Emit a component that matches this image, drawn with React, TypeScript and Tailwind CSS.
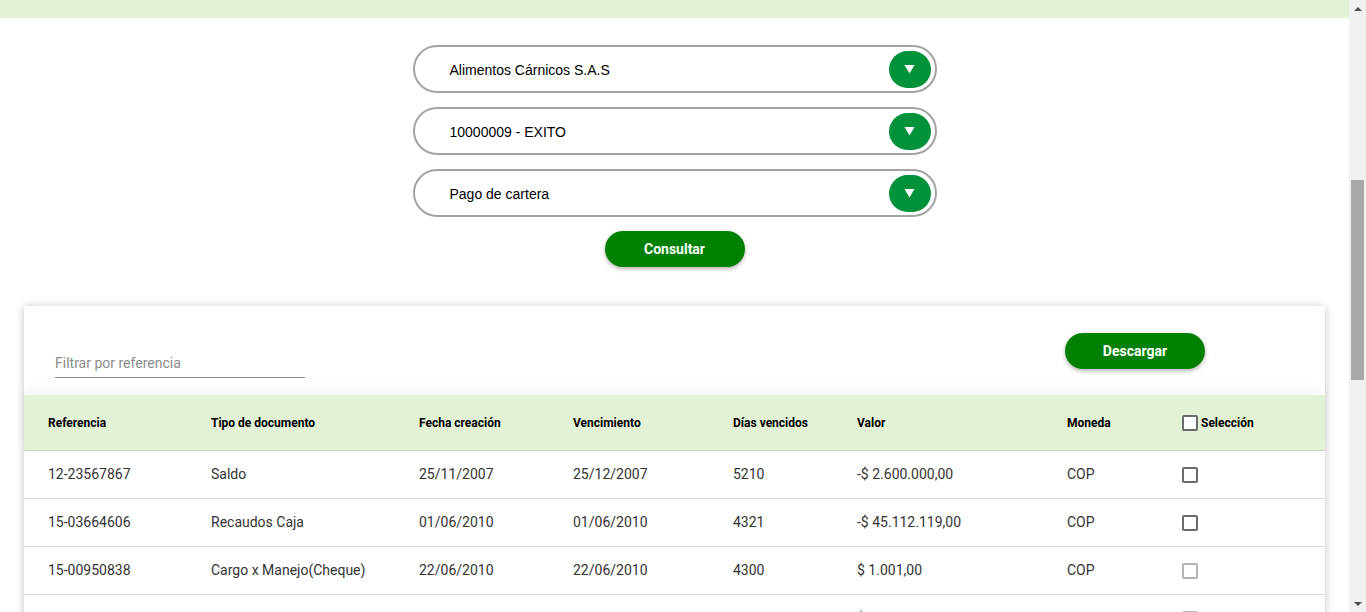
import React from 'react';

const selects = ['Alimentos Cárnicos S.A.S', '10000009 - EXITO', 'Pago de cartera'];

const rows = [
  { ref: '12-23567867', tipo: 'Saldo', fecha: '25/11/2007', venc: '25/12/2007', dias: '5210', valor: '-$ 2.600.000,00', moneda: 'COP', disabled: false },
  { ref: '15-03664606', tipo: 'Recaudos Caja', fecha: '01/06/2010', venc: '01/06/2010', dias: '4321', valor: '-$ 45.112.119,00', moneda: 'COP', disabled: false },
  { ref: '15-00950838', tipo: 'Cargo x Manejo(Cheque)', fecha: '22/06/2010', venc: '22/06/2010', dias: '4300', valor: '$ 1.001,00', moneda: 'COP', disabled: true },
  { ref: '', tipo: '', fecha: '', venc: '', dias: '', valor: '$ 1.001,00', moneda: '', disabled: true },
];

const cols = 'grid grid-cols-[163px_208px_154px_160px_124px_210px_115px_1fr] pl-[24px] items-center';

function Checkbox({ disabled }: { disabled?: boolean }) {
  return (
    <span
      className={`inline-block w-[16px] h-[16px] rounded-[2px] border-2 bg-white ${disabled ? 'border-[#b4b4b4]' : 'border-[#6b6b6b]'}`}
    />
  );
}

function SelectBox({ label }: { label: string }) {
  return (
    <div className="w-[524px] h-[48px] rounded-full border-2 border-[#a3a3a3] flex items-center justify-between pl-[35px] pr-[4px] bg-white">
      <span className="text-[14px] text-black pt-[2px] font-['Liberation_Sans',Arial,sans-serif]">{label}</span>
      <span className="w-[42px] h-[37px] rounded-full bg-[#00923a] flex items-center justify-center">
        <svg width="11" height="10" viewBox="0 0 11 10">
          <path d="M0.5 1 L10.5 1 L5.5 9.5 Z" fill="#fff" />
        </svg>
      </span>
    </div>
  );
}

export default function App() {
  return (
    <div className="flex w-full h-screen overflow-hidden bg-white font-['Roboto',sans-serif]">
      <div className="flex-1 flex flex-col min-w-0">
        <div className="h-[18px] bg-[#e3f1d6] shrink-0" />

        <div className="flex flex-col items-center pt-[27px] gap-[14px]">
          {selects.map(s => (
            <SelectBox key={s} label={s} />
          ))}
          <button className="w-[140px] h-[36px] rounded-full bg-[#008000] text-white text-[14px] font-bold shadow-[0_2px_4px_rgba(0,0,0,0.3)]">
            Consultar
          </button>
        </div>

        <div className="mx-[24px] mt-[39px] bg-white shadow-[0_1px_8px_rgba(0,0,0,0.25)]">
          <div className="h-[89px] flex justify-between items-start pl-[31px] pr-[120px]">
            <div className="mt-[47px] w-[250px] h-[25px] border-b border-[#8a8a8a] flex items-start">
              <span className="text-[14px] text-[#8b8b8b]">Filtrar por referencia</span>
            </div>
            <button className="mt-[27px] w-[140px] h-[36px] rounded-full bg-[#008000] text-white text-[14px] font-bold shadow-[0_2px_4px_rgba(0,0,0,0.3)]">
              Descargar
            </button>
          </div>

          <div className={`${cols} h-[56px] bg-[#e3f1d6] border-b border-[#c4dbb2] text-[12px] font-bold text-black shadow-[0_-6px_10px_rgba(0,0,0,0.04)]`}>
            <span>Referencia</span>
            <span>Tipo de documento</span>
            <span>Fecha creación</span>
            <span>Vencimiento</span>
            <span>Días vencidos</span>
            <span>Valor</span>
            <span>Moneda</span>
            <span className="flex items-center gap-[3px]">
              <Checkbox />
              Selección
            </span>
          </div>

          {rows.map((r, i) => (
            <div key={i} className={`${cols} h-[48px] border-b border-[#dcdcdc] text-[14px] text-[#333]`}>
              <span>{r.ref}</span>
              <span>{r.tipo}</span>
              <span>{r.fecha}</span>
              <span>{r.venc}</span>
              <span>{r.dias}</span>
              <span>{r.valor}</span>
              <span>{r.moneda}</span>
              <span className="flex items-center">
                <Checkbox disabled={r.disabled} />
              </span>
            </div>
          ))}
        </div>
      </div>

      {/* scrollbar */}
      <div className="w-[17px] shrink-0 bg-[#f1f1f1] flex flex-col items-center">
        <div className="h-[17px] flex items-center justify-center">
          <svg width="8" height="4" viewBox="0 0 8 4"><path d="M0 4 L4 0 L8 4 Z" fill="#505050" /></svg>
        </div>
        <div className="mt-[163px] w-[13px] h-[200px] bg-[#a8a8a8]" />
        <div className="flex-1" />
        <div className="h-[17px] flex items-center justify-center">
          <svg width="8" height="4" viewBox="0 0 8 4"><path d="M0 0 L8 0 L4 4 Z" fill="#505050" /></svg>
        </div>
      </div>
    </div>
  );
}
